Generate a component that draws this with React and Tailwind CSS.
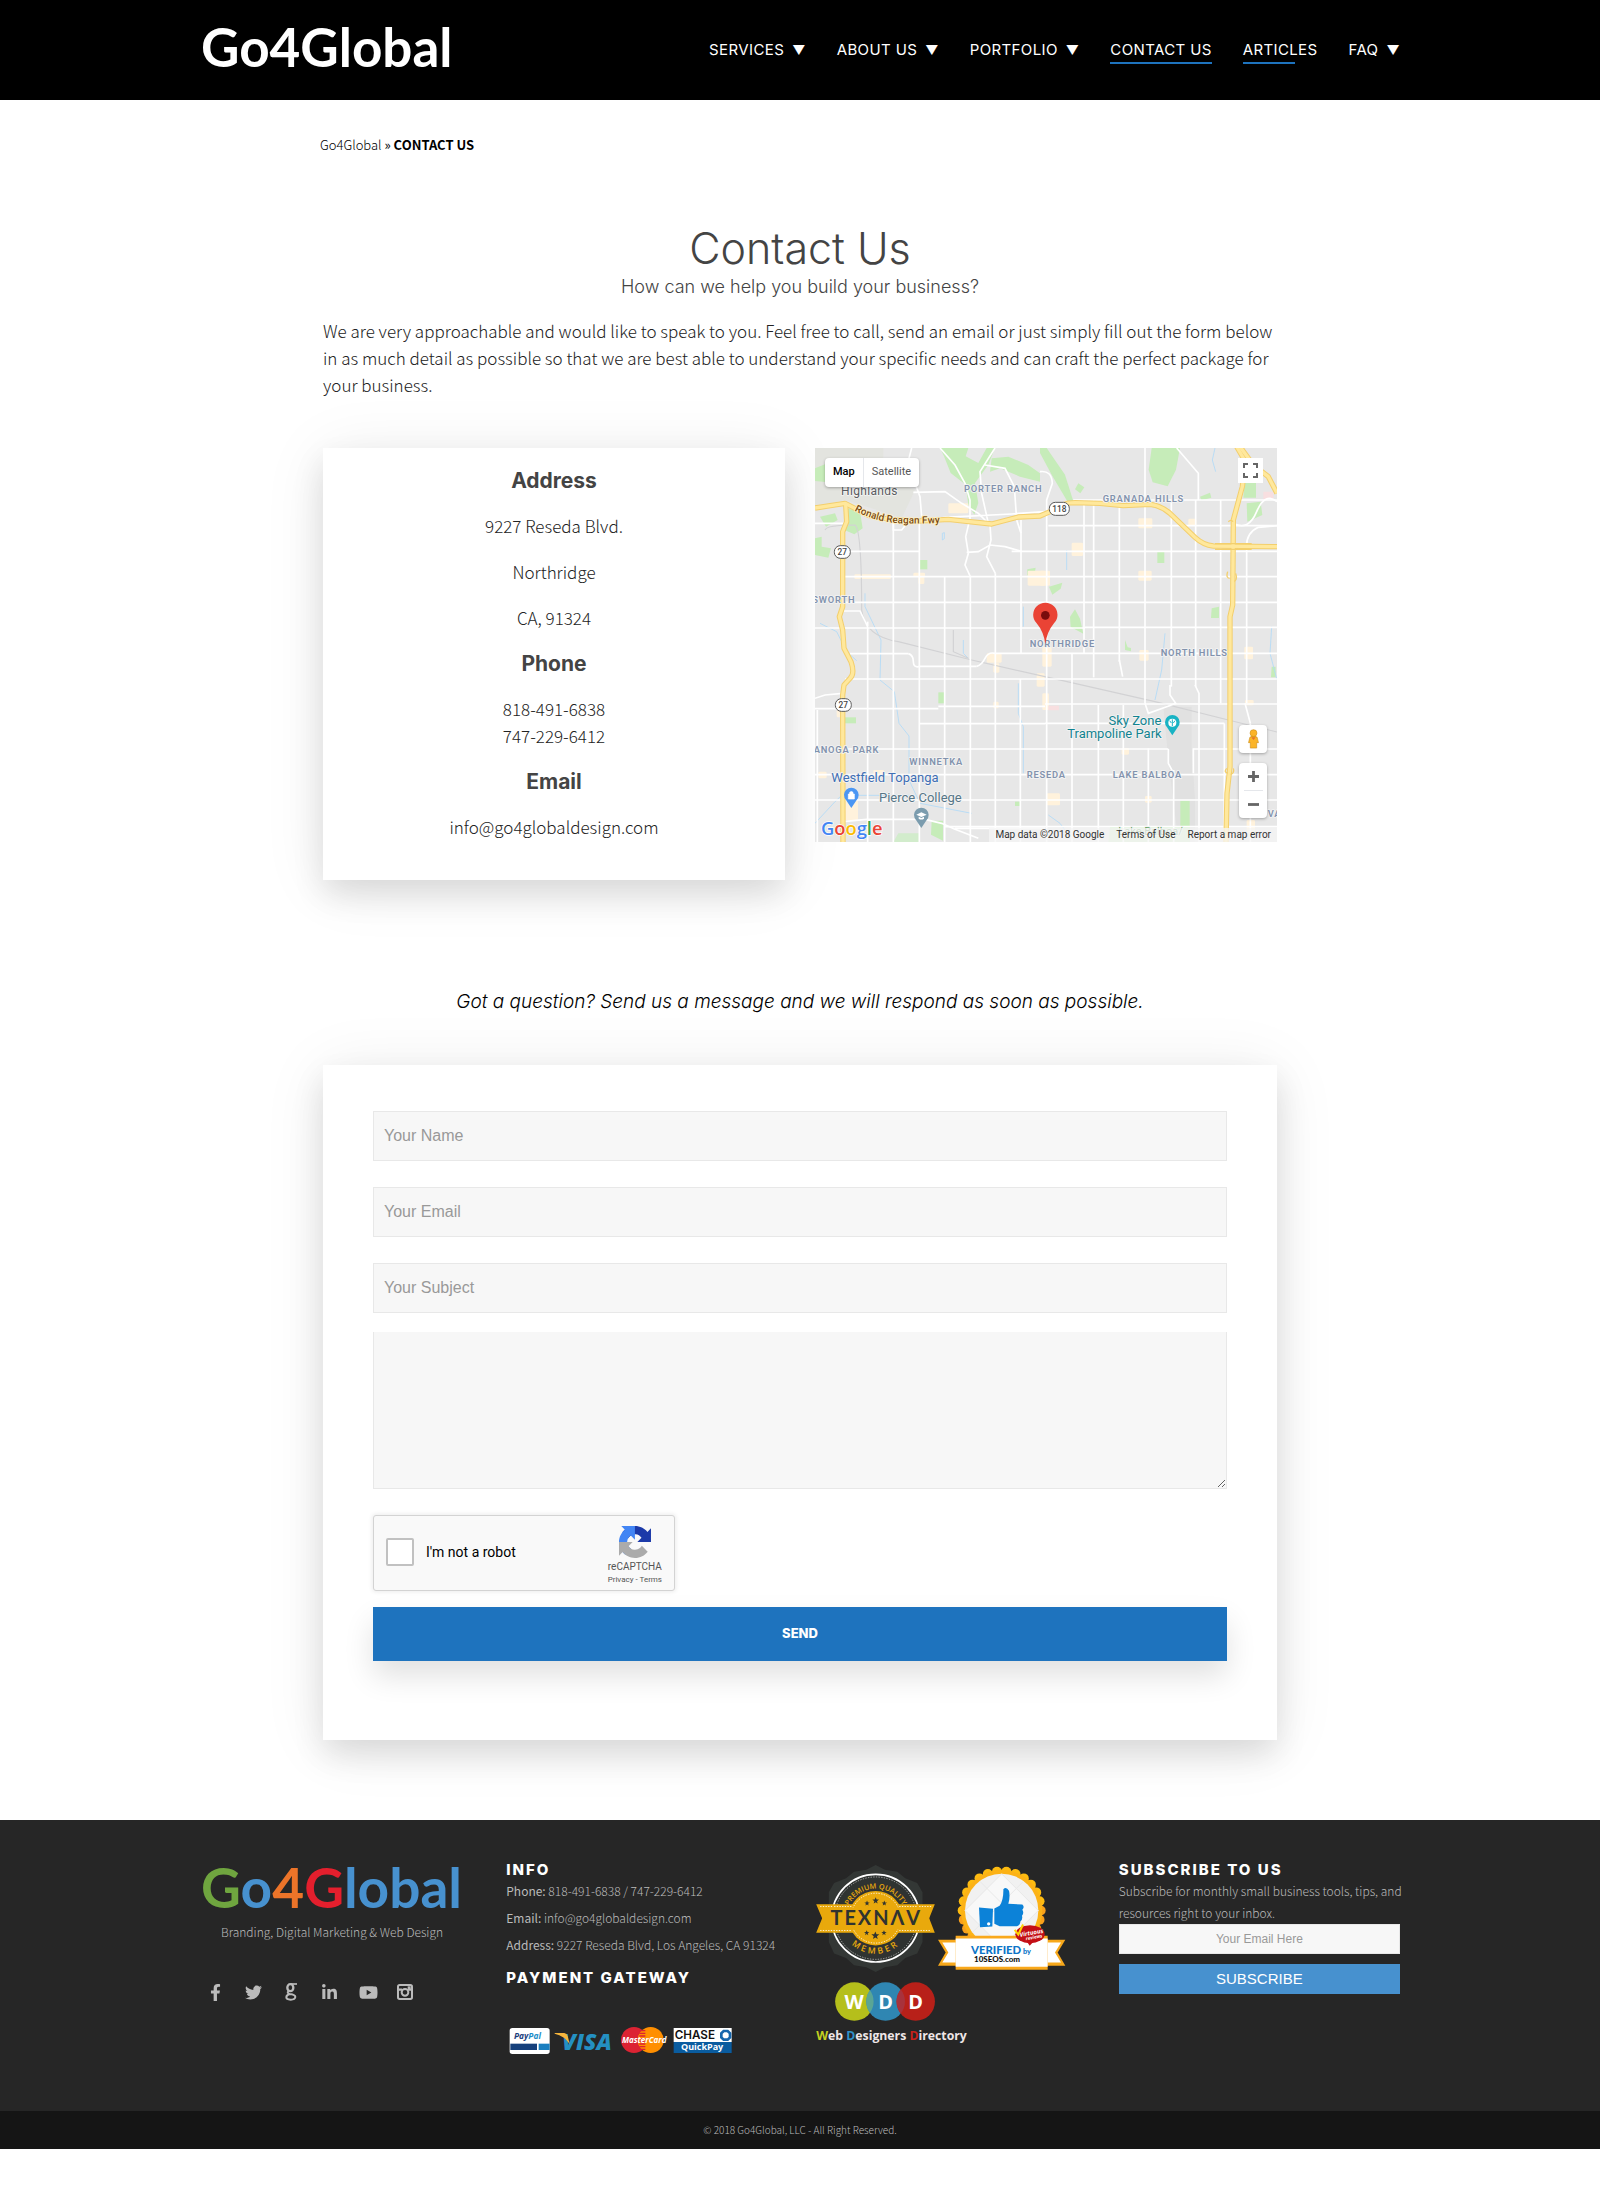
import React from "react";
import { FaFacebookF, FaTwitter, FaLinkedinIn, FaYoutube } from "react-icons/fa";

const sans = "font-['Noto_Sans_CJK_SC',sans-serif]";
const display = "font-['Inter',sans-serif]";
const cardShadow = "shadow-[0_15px_30px_rgba(0,0,0,0.11),0_5px_60px_rgba(0,0,0,0.08)]";

const navItems = [
  { label: "SERVICES", menu: true },
  { label: "ABOUT US", menu: true },
  { label: "PORTFOLIO", menu: true },
  { label: "CONTACT US", line: "w-full" },
  { label: "ARTICLES", line: "w-[70%]" },
  { label: "FAQ", menu: true },
];

function Header() {
  return (
    <header className="bg-black text-white">
      <div className="mx-auto flex h-[100px] max-w-[1200px] items-center justify-between">
        <a href="#home" className="pb-[6px] pl-px font-['Lato',sans-serif] text-[53px] leading-[60px] font-bold">
          Go4Global
        </a>
        <nav className={`${display} flex gap-[31px] text-[15px] leading-[20px]`}>
          {navItems.map((item) => (
            <a key={item.label} href="#nav" className="relative whitespace-nowrap tracking-wide">
              {item.label}
              {item.menu && <span className="ml-1 text-[13px]"> ▼</span>}
              {item.line && <span className={`absolute top-[22px] left-0 h-[2px] bg-[#1e73be] ${item.line}`} />}
            </a>
          ))}
        </nav>
      </div>
    </header>
  );
}

const verticals = [
  [37, 810, 1206], [188, 545, 1206], [265, 240, 1206], [343, 250, 1206], [419, 410, 1206], [496, 410, 1206],
  [571, 400, 1206], [648, 240, 640], [646, 717, 1206], [725, 300, 1206], [801, 640, 1206], [837, 180, 640],
  [866, 180, 712], [880, 795, 1206], [943, 180, 665], [1020, 24, 790], [955, 795, 1206], [1030, 925, 1206],
  [1099, 180, 740], [1106, 990, 1206], [1172, 180, 740], [1165, 925, 1000], [1182, 790, 1206], [1247, 180, 790],
  [1258, 850, 1206], [1325, 330, 790], [1336, 850, 1206],
];
const horizontals = [
  [334, 130, 343], [334, 620, 1416], [410, 115, 1416], [487, 120, 1416], [564, 30, 840], [562, 840, 1416], [641, 135, 310],
  [640, 570, 1416], [679, 345, 515], [717, 120, 1416], [806, 30, 400], [799, 400, 720], [792, 720, 1416],
  [851, 343, 720], [850, 720, 1258], [927, 40, 1090], [927, 1165, 1416], [1004, 30, 1416], [1080, 30, 1416],
  [1160, 420, 1416], [180, 805, 1416], [257, 730, 1416],
];
const freeways = [
  "M30 204L120 190L190 226L265 240L343 243L430 238L560 252L640 231L705 228L735 215Q770 188 810 188L885 190L955 197L1035 193Q1065 195 1095 220L1170 292Q1195 315 1225 318L1416 320",
  "M122 192L125 245L113 275L113 500L103 530L113 570L117 625L138 665Q150 700 136 714L117 735L113 765L114 1206",
  "M1295 20L1322 66L1312 140L1285 240L1283 495L1275 530L1275 980L1266 1060L1263 1206",
  "M1305 20L1345 75L1390 110L1416 160",
];
const parks = [
  "M405 24h85l-8 25l38 20l25-45h25l-20 50l-40 55l10 60l-12 35l-18-30l-8-60l-45-35l-20-50z",
  "M560 55l50-5l60 25l35 25v25l-60-15l-60-25l-30 10z",
  "M705 24h20l55 80l25 80l-15 5l-50-85l-35-65z",
  "M1040 24h85l-12 65l-25 50l-45-12l-12-38z",
  "M30 85l30-12l40 30l-15 25l-55-5z", "M125 205l40 10l8 50l-25 18l-28-12z",
  "M30 295l20-5v30l28 5l-8 28l-40-8z", "M45 230l45-10l8 20l-35 20z",
  "M345 360h22v28h-22z", "M400 757h17v33h-17z", "M118 832h35v18h-35z", "M667 388l25-5l-4 25l-22-2z",
  "M1057 334h21v35h-21z", "M1220 505l22-5v34h-24z", "M795 530l15-22l15 28l10 45l-38-20z",
  "M732 440l40-12l-5 18l-25 18z", "M960 600v30l18 4v-10l-10-2z", "M1126 1082h28v80h-28z",
  "M380 1142h34v60l-36-18z", "M630 1085h18v13h-18z", "M1318 130l35-5v48h-38z", "M1325 190l42-5l5 40l-45 20z",
  "M1400 680h12v32h-14z", "M820 130l18 12l-12 18l-16-12z", "M1185 170l30-12l4 15l-30 8z",
];
const shops = [
  [325, 398, 35, 12], [340, 408, 18, 24], [148, 403, 110, 14], [430, 190, 60, 30], [545, 640, 45, 28], [565, 670, 18, 28],
  [668, 392, 52, 45], [565, 785, 16, 20], [117, 1080, 42, 60], [95, 810, 20, 22], [800, 308, 34, 40], [1000, 235, 42, 30],
  [1000, 392, 40, 30], [1150, 236, 24, 22], [705, 392, 30, 45], [712, 620, 28, 60], [1003, 630, 28, 32], [1318, 620, 26, 38],
  [712, 760, 20, 50], [725, 1060, 40, 36], [1020, 1068, 20, 20], [950, 924, 22, 20], [40, 995, 25, 20], [205, 990, 32, 20],
  [695, 700, 24, 40], [1320, 780, 26, 16], [1325, 1140, 25, 40],
];
const streams = [
  "M180 460L180 500L228 600L225 720L268 755L282 850L312 888L312 1020L345 1090L500 1120",
  "M45 550L95 575L125 635L155 662", "M655 500V560", "M640 730L640 820L655 860V1000",
  "M475 600V640L490 655", "M1230 24L1222 60L1232 95", "M785 330V390", "M1080 580L1070 690L1050 780",
  "M30 1150L90 1085L110 1066H330", "M412 280v20l6-4v-18z", "M1400 560L1395 640L1416 720", "M730 1125l35 25l15 20",
];
const districts = [
  ["PORTER RANCH", 477, 156], ["GRANADA HILLS", 893, 187], ["SWORTH", 22, 489], ["NORTHRIDGE", 674, 621],
  ["NORTH HILLS", 1067, 649], ["ANOGA PARK", 26, 940], ["WINNETKA", 313, 976], ["RESEDA", 665, 1015],
  ["LAKE BALBOA", 923, 1015], ["VAN", 1388, 1132],
];

function MapDrawing() {
  return (
    <svg viewBox="30 24 1386 1182" preserveAspectRatio="xMidYMid slice" className="block h-full w-full font-['Roboto',sans-serif]" role="img" aria-label="Map of Northridge">
      <defs>
        <path id="fwyLabel" d="M148 212Q215 248 290 250T425 248" />
      </defs>
      <rect x="0" y="0" width="1440" height="1230" fill="#e7e7e7" />
      <path d="M30 24H235V110L330 150L290 235L200 205L120 180L30 200Z" fill="#e3e4df" />
      <path d="M1075 800H1160V925L1170 1080V1206H1120L1090 960Z" fill="#e1e1e1" />
      {parks.map((d) => <path key={d} d={d} fill="#c6ecb9" />)}
      <path d="M280 1180h65v26h-80z M915 1160h240v46h-245z" fill="#d2eccc" />
      {shops.map(([x, y, w, h]) => <rect key={`${x}-${y}`} x={x} y={y} width={w} height={h} rx="4" fill="#fff2dc" />)}
      <path d="M730 797h32v14h-32z M1375 155h30v22h-30z" fill="#f8dfe0" />
      <g fill="none" stroke="#b0daf8" strokeWidth="2.5">{streams.map((d) => <path key={d} d={d} />)}</g>
      <g fill="none" stroke="#d2d2d4" strokeWidth="3.5">
        <path d="M60 270Q65 255 150 255Q170 270 170 510Q180 590 280 605L500 660L720 710L1050 785L1270 840L1416 876" />
        <path d="M445 570V635L490 655" />
      </g>
      <g fill="none" stroke="#fff" strokeWidth="5">
        {verticals.map(([x, a, b]) => <path key={`v${x}-${a}`} d={`M${x} ${a}V${b}`} />)}
        {horizontals.map(([y, a, b]) => <path key={`h${y}-${a}`} d={`M${a} ${y}H${b}`} />)}
        <path d="M265 240V270H290L310 245M320 24L308 70L345 170L350 230M325 157L420 155L470 190L520 220L555 255L558 300L545 350L571 400M405 24L450 75L480 130L495 180V235L482 290L490 340L480 375L496 410" />
        <path d="M570 24L525 95L530 160L550 250M540 75L600 85L628 140L635 240L648 280M30 250H120M310 250L420 232L620 222L720 215M485 337L520 335L555 315L600 320L650 334" />
        <path d="M705 95Q740 90 742 130L725 180V300M1115 24L1180 100V180M1020 790L1030 820L1085 800L1112 790L1095 765V735M943 660L953 710M1170 735L1182 760V790" />
        <path d="M115 513H165L188 560M310 641Q325 645 325 665T345 679M515 679Q530 675 540 655T570 640M30 775L60 765L113 760M114 1145L185 1138H360L410 1150L450 1168L520 1195" />
        <path d="M1090 927V970L1106 1000M1325 330Q1320 280 1360 262L1416 257M1285 250Q1330 275 1355 215T1416 185M1320 790L1336 850M450 1165H720" />
      </g>
      <g fill="none" stroke="#f3cf6d" strokeWidth="16" strokeLinejoin="round">{freeways.map((d) => <path key={d} d={d} />)}</g>
      <g fill="none" stroke="#ffe89c" strokeWidth="10" strokeLinejoin="round">{freeways.map((d) => <path key={d} d={d} />)}</g>
      <g fill="none" stroke="#f3cf6d" strokeWidth="4">
        <path d="M1270 245q8-8 14 0M1268 395q-6 20 6 20M1292 400q6 20-4 24M1265 985q-10 12 4 14M1285 985q4 14-8 18M1230 311h110M1230 328h110" />
      </g>
      <g fill="#fff" stroke="#5a5a5a" strokeWidth="3">
        <rect x="88" y="317" width="48" height="38" rx="18" />
        <rect x="91" y="776" width="48" height="38" rx="18" />
        <rect x="733" y="187" width="60" height="39" rx="18" />
      </g>
      <g fill="#444" fontSize="25" fontWeight="500" textAnchor="middle">
        <text x="112" y="345">27</text>
        <text x="115" y="804">27</text>
        <text x="763" y="216">118</text>
      </g>
      <g stroke="#f4f4f4" strokeWidth="5" strokeLinejoin="round" paintOrder="stroke">
        <g fill="#8292ad" fontSize="28" fontWeight="600" letterSpacing="2.4">
          {districts.map(([t, x, y]) => <text key={t} x={x} y={y}>{t}</text>)}
        </g>
        <text x="108" y="165" fill="#5a5d61" fontSize="36" letterSpacing="1">Highlands</text>
        <text fill="#7a4a12" fontSize="30" fontWeight="500" stroke="#fff1c4"><textPath href="#fwyLabel">Ronald Reagan Fwy</textPath></text>
        <text x="79" y="1027" fill="#3f6fb5" fontSize="39">Westfield Topanga</text>
        <text x="222" y="1087" fill="#567687" fontSize="39">Pierce College</text>
        <g fill="#128390" fontSize="39" textAnchor="end">
          <text x="1069" y="854">Sky Zone</text>
          <text x="1070" y="893">Trampoline Park</text>
        </g>
        <text x="940" y="1186" fill="#5f9e5f" fontSize="33">Lake Balboa/</text>
      </g>
      <g>
        <path d="M139 1104L123 1080A22 22 0 1 1 155 1080Z" fill="#4b96f3" />
        <path d="M130 1062h18v15h-18zM134 1062v-5q5-5 10 0v5" fill="#fff" stroke="#fff" strokeWidth="2" />
        <path d="M349 1164L333 1140A22 22 0 1 1 365 1140Z" fill="#7b9cae" />
        <path d="M334 1124l15-7l16 7l-16 7zM341 1130v6q8 5 16 0v-6l-8 4z" fill="#fff" />
        <path d="M1102 886L1086 862A22 22 0 1 1 1118 862Z" fill="#18b3c4" />
        <circle cx="1102" cy="848" r="12" fill="#fff" /><path d="M1102 838v20M1094 842l5 7M1110 842l-5 7" stroke="#18b3c4" strokeWidth="3" />
        <path d="M721 612Q716 575 695 550A36.500 36.500 0 1 1 747 550Q726 575 721 612Z" fill="#ea4335" />
        <circle cx="721" cy="526" r="13" fill="#7a0c0c" />
      </g>
      <text x="48" y="1184" fontSize="55" fontWeight="600" stroke="#fff" strokeWidth="4" paintOrder="stroke" className="font-['Open_Sans',sans-serif]">
        <tspan fill="#4285f4">G</tspan><tspan fill="#ea4335">o</tspan><tspan fill="#fbbc05">o</tspan>
        <tspan fill="#4285f4">g</tspan><tspan fill="#34a853">l</tspan><tspan fill="#ea4335">e</tspan>
      </text>
    </svg>
  );
}

function MapPanel() {
  return (
    <div className="relative h-[394px] overflow-hidden font-['Roboto',sans-serif]">
      <MapDrawing />
      <div className="absolute top-[10px] left-[10px] flex h-[29px] rounded-sm bg-white text-[11px] shadow-[0_1px_3px_rgba(0,0,0,0.3)]">
        <button className="border-r border-gray-200 px-2 font-medium text-black">Map</button>
        <button className="px-2 text-[#565656]">Satellite</button>
      </div>
      <button aria-label="Toggle fullscreen" className="absolute top-[10px] right-[14px] flex size-[25px] items-center justify-center bg-white">
        <svg viewBox="0 0 15 15" className="size-[15px]" fill="none" stroke="#666" strokeWidth="2">
          <path d="M1 5V1H5M10 1H14V5M14 10V14H10M5 14H1V10" />
        </svg>
      </button>
      <button aria-label="Street view" className="absolute right-[10px] bottom-[89px] flex size-[28px] items-center justify-center rounded-sm bg-white shadow-[0_1px_3px_rgba(0,0,0,0.3)]">
        <svg viewBox="0 0 14 22" className="h-[20px] w-[13px]">
          <path d="M3 9Q7 6 11 9L12.500 15H10.500V21H3.500V15H1.500Z" fill="#fbb428" stroke="#c8860e" strokeWidth=".6" />
          <circle cx="7" cy="4.500" r="3.800" fill="#fbb428" stroke="#c8860e" strokeWidth=".6" />
          <path d="M4.500 9h5L7 12Z" fill="#e5752b" />
        </svg>
      </button>
      <div className="absolute right-[10px] bottom-[24px] flex w-[28px] flex-col items-center rounded-sm bg-white shadow-[0_1px_3px_rgba(0,0,0,0.3)]">
        <button aria-label="Zoom in" className="flex h-[27px] w-full items-center justify-center">
          <svg viewBox="0 0 11 11" className="size-[11px]" stroke="#666" strokeWidth="2.800"><path d="M0 5.500H11M5.500 0V11" /></svg>
        </button>
        <span className="h-px w-[19px] bg-gray-200" />
        <button aria-label="Zoom out" className="flex h-[27px] w-full items-center justify-center">
          <svg viewBox="0 0 11 11" className="size-[11px]" stroke="#666" strokeWidth="2.800"><path d="M0 5.500H11" /></svg>
        </button>
      </div>
      <div className="absolute right-0 bottom-0 flex h-[14px] items-center gap-3 bg-[#f5f5f5]/75 px-[6px] text-[10px] leading-[14px] text-[#333]">
        <span>Map data ©2018 Google</span>
        <a href="#terms">Terms of Use</a>
        <a href="#report">Report a map error</a>
      </div>
    </div>
  );
}

const h3 = `${display} pt-[2px] text-[21px] leading-[24px] font-bold text-[#444]`;

function AddressCard() {
  return (
    <div className={`flex flex-col gap-[19px] bg-white pt-[19px] pb-[40px] text-center text-[17px] leading-[27px] font-light text-[#222] ${cardShadow}`}>
      <h3 className={h3}>Address</h3>
      <p>9227 Reseda Blvd.</p>
      <p>Northridge</p>
      <p>CA, 91324</p>
      <h3 className={h3}>Phone</h3>
      <p>818-491-6838<br />747-229-6412</p>
      <h3 className={h3}>Email</h3>
      <p>info@go4globaldesign.com</p>
    </div>
  );
}

const field = "block w-full border border-[#e8e8e8] bg-[#f7f7f7] px-[10px] text-[16px] placeholder:text-[#999] font-['Liberation_Sans',sans-serif]";

function Captcha() {
  return (
    <div className="mt-[26px] flex h-[76px] w-[302px] items-center justify-between rounded-[3px] border border-[#d3d3d3] bg-[#f9f9f9] px-[12px] font-['Roboto',sans-serif] shadow-[0_0_4px_1px_rgba(0,0,0,0.08)]">
      <label className="flex items-center gap-3 pb-[2px] text-[14px] text-black">
        <input type="checkbox" className="size-[28px] appearance-none rounded-[2px] border-2 border-[#c1c1c1] bg-white" />
        I'm not a robot
      </label>
      <div className="flex flex-col items-center pt-[6px] text-[#555]">
        <svg viewBox="0 0 64 64" className="mb-[2px] size-[32px]">
          <path fill="#1c3aa9" d="M64 31.955l-.033-1.37V4.687l-7.16 7.16C50.948 4.674 42.033.093 32.05.093c-10.4 0-19.622 4.96-25.458 12.64l11.736 11.86a15.55 15.55 0 0 1 4.754-5.334c2.050-1.600 4.952-2.906 8.968-2.906.485 0 .86.057 1.135.163 4.976.393 9.288 3.140 11.828 7.124l-8.307 8.307L64 31.953" />
          <path fill="#4285f4" d="M31.862.094l-1.370.033H4.594l7.160 7.160C4.580 13.147 0 22.060 0 32.046c0 10.400 4.960 19.622 12.640 25.458L24.500 45.768a15.550 15.550 0 0 1-5.334-4.754c-1.600-2.050-2.906-4.952-2.906-8.968 0-.485.057-.86.163-1.135.393-4.976 3.140-9.288 7.124-11.828l8.307 8.307L31.860.095" />
          <path fill="#ababab" d="M.001 32.045l.033 1.370v25.898l7.160-7.160c5.860 7.173 14.774 11.754 24.760 11.754 10.400 0 19.622-4.960 25.458-12.640l-11.736-11.860a15.550 15.550 0 0 1-4.754 5.334c-2.050 1.600-4.952 2.906-8.968 2.906-.485 0-.86-.057-1.135-.163-4.976-.393-9.288-3.140-11.828-7.124l8.307-8.307c-10.522.040-22.400.066-27.295-.005" />
        </svg>
        <span className="text-[10px] leading-[14px]">reCAPTCHA</span>
        <span className="text-[8px] leading-[12px]"><a href="#privacy">Privacy</a> - <a href="#captcha-terms">Terms</a></span>
      </div>
    </div>
  );
}

function ContactForm() {
  return (
    <form className={`bg-white px-[50px] pt-[46px] pb-[79px] ${cardShadow}`} onSubmit={(e) => e.preventDefault()}>
      <div className="flex flex-col gap-[26px]">
        <input type="text" aria-label="Your Name" placeholder="Your Name" className={`${field} h-[50px]`} />
        <input type="email" aria-label="Your Email" placeholder="Your Email" className={`${field} h-[50px]`} />
        <input type="text" aria-label="Your Subject" placeholder="Your Subject" className={`${field} h-[50px]`} />
      </div>
      <textarea aria-label="Message" className={`${field} mt-[19px] h-[157px] border-t-0`} />
      <Captcha />
      <button type="submit" className={`${display} mt-4 h-[54px] w-full bg-[#1e73be] text-[13px] font-extrabold text-white shadow-[0_15px_30px_rgba(0,0,0,0.12)]`}>
        SEND
      </button>
    </form>
  );
}

function GoogleIcon() {
  return (
    <svg viewBox="0 0 36 54" className="ml-[2px] h-[18px] w-[12px]" fill="none" stroke="currentColor">
      <ellipse cx="16" cy="14" rx="9" ry="10.500" strokeWidth="7" />
      <path d="M17 3H36" strokeWidth="5" />
      <path d="M11 24Q4 30 14 33Q31 35 31 42Q30 50 17 50Q4 50 4 43Q4 36 14 33" strokeWidth="6" />
    </svg>
  );
}

function CameraIcon() {
  return (
    <svg viewBox="0 0 48 48" className="size-[16px]" fill="none" stroke="currentColor">
      <rect x="3" y="3" width="42" height="42" rx="5" strokeWidth="6" />
      <circle cx="24" cy="25" r="10" strokeWidth="6" />
      <path d="M3 17H15M33 17H45" strokeWidth="7" />
      <rect x="32" y="7" width="9" height="9" fill="currentColor" stroke="none" />
    </svg>
  );
}

const socials = [
  ["Facebook", <FaFacebookF size={17} />],
  ["Twitter", <FaTwitter size={17} />],
  ["Google", <GoogleIcon />],
  ["LinkedIn", <FaLinkedinIn size={17} />],
  ["YouTube", <FaYoutube size={19} />],
  ["Instagram", <CameraIcon />],
];

function PaymentCards() {
  return (
    <svg viewBox="55 555 675 90" className="mt-[37px] ml-[2px] h-[30px] w-[225px]" role="img" aria-label="Accepted payment methods">
      <rect x="60" y="564" width="120" height="78" rx="8" fill="#fff" />
      <path d="M62 611H142V630H62Z" fill="#15407c" /><path d="M147 611H180V630H147Z" fill="#1a7fc0" />
      <g className="font-['Open_Sans',sans-serif]" fontWeight="800" fontStyle="italic">
        <text x="73" y="596" fontSize="25" fontWeight="700" fill="#1b3d7c">Pay<tspan fill="#1a8cc8">Pal</tspan></text>
        <text x="217" y="630" fontSize="68" fill="#2490c2">VISA</text>
        <path d="M195 579H224Q232 580 234 588L240 612Q225 588 195 581Z" fill="#f5b43c" />
        <circle cx="433" cy="600" r="39" fill="#dc2333" /><circle cx="483" cy="600" r="39" fill="#ff8f00" />
        <path d="M458 570V630" stroke="#dc2333" strokeWidth="18" strokeDasharray="4 4" />
        <text x="397" y="609" fontSize="24" fontWeight="700" fill="#fff">MasterCard</text>
      </g>
      <rect x="552" y="564" width="174" height="42" fill="#fff" /><rect x="552" y="606" width="174" height="33" fill="#0a5c9f" />
      <text x="555" y="598" fontSize="35" fontWeight="600" fill="#111" className="font-['Inter',sans-serif]">CHASE</text>
      <path d="M702 573H714L721 580V592L714 599H702L695 592V580Z" fill="none" stroke="#1767ad" strokeWidth="8" />
      <text x="574" y="630" fontSize="27" fontWeight="700" fill="#fff" className="font-['Open_Sans',sans-serif]">QuickPay</text>
    </svg>
  );
}

const star = "M0 -10L3 -3L10 -3L4 2L6 9L0 5L-6 9L-4 2L-10 -3L-3 -3Z";

function TexnavBadge() {
  return (
    <svg viewBox="45 65 360 325" className="h-[108px] w-[120px]" role="img" aria-label="Texnav premium quality member">
      <defs>
        <path id="texTop" d="M142 259A90 90 0 1 1 312 259" />
        <path id="texBottom" d="M120 228A107 107 0 0 0 334 228" />
      </defs>
      <path d="M227 68L255 82L292 88L316 108L352 122L368 150V300L352 334L316 348L292 370L255 376L227 390L199 376L162 370L138 348L102 334L86 300V150L102 122L138 108L162 88L199 82Z" fill="#333735" />
      <circle cx="227" cy="228" r="132" fill="#2f3331" stroke="#fff" strokeWidth="5" />
      <circle cx="227" cy="228" r="124" fill="none" stroke="#ddd" strokeWidth="2" strokeDasharray="4 4" />
      <circle cx="227" cy="228" r="82" fill="#e9a90c" />
      <path d="M48 186H405L388 228L405 272H48L66 228Z" fill="#e9a90c" />
      <circle cx="227" cy="228" r="75" fill="none" stroke="#fff" strokeWidth="2.500" strokeDasharray="4 4" />
      <path d="M102 193H156M298 193H352M60 193H96M358 193H394M60 265H156M298 265H394" stroke="#fff" strokeWidth="2.500" strokeDasharray="4 4" />
      <path d="M66 196H388V262H66Z" fill="#e9a90c" />
      <g fill="#2f3331">
        <path d={star} transform="translate(227 175)" /><path d={star} transform="translate(201 183) scale(.8)" /><path d={star} transform="translate(253 183) scale(.8)" />
        <path d={star} transform="translate(226 280) scale(1.200)" /><path d={star} transform="translate(200 272) scale(.8)" /><path d={star} transform="translate(252 272) scale(.8)" />
      </g>
      <text x="229" y="249" fontSize="60" fontWeight="700" letterSpacing="6" fill="#2f3331" textAnchor="middle" className="font-['Lato',sans-serif]">TEXNΛV</text>
      <g fill="#e9a90c" textAnchor="middle" className="font-['Open_Sans',sans-serif]" fontWeight="600">
        <text fontSize="22"><textPath href="#texTop" startOffset="50%">PREMIUM QUALITY</textPath></text>
        <text fontSize="26" letterSpacing="8"><textPath href="#texBottom" startOffset="50%">MEMBER</textPath></text>
      </g>
    </svg>
  );
}

const scallops = Array.from({ length: 26 }, (_, i) => (i * 2 * Math.PI) / 26);

function VerifiedBadge() {
  return (
    <svg viewBox="412 75 390 320" className="h-[107px] w-[130px]" role="img" aria-label="Verified by 10seos.com">
      <path d="M415 302H500V380H415L438 340ZM797 302H712V380H797L774 340Z" fill="#f7a81b" />
      <path d="M428 310H500V370H428L446 340ZM784 310H712V370H784L766 340Z" fill="#fff" />
      {scallops.map((a) => <circle key={a} cx={606 + 117 * Math.cos(a)} cy={214 + 117 * Math.sin(a)} r="15" fill={Math.sin(a) < 0 ? "#fdbb10" : "#f9a01b"} />)}
      <circle cx="606" cy="214" r="122" fill="#fcb216" />
      <circle cx="606" cy="214" r="110" fill="#f1f1f1" />
      <path d="M606 104L716 214L606 324L496 214ZM540 126L694 280M672 126L518 280" fill="#f8f8f8" stroke="#e8e8e8" strokeWidth="3" />
      <path d="M538 205L580 209L578 262L541 264Z" fill="#0c82d8" /><circle cx="567" cy="254" r="5" fill="#fff" />
      <path d="M584 208L600 200Q612 182 611 150Q620 141 628 155Q632 172 626 194L668 196Q676 203 668 212Q674 222 667 230Q670 242 662 247Q662 258 652 261H600L584 254Z" fill="#0c82d8" />
      <path d="M468 290H744V392H468Z" fill="#f9a81b" /><path d="M468 298H744V383H468Z" fill="#fff" />
      <text x="514" y="344" fontSize="34" fontWeight="900" fill="#0c75c8" className="font-['Lato',sans-serif]">VERIFIED<tspan dx="5" fontSize="22">by</tspan></text>
      <text x="523" y="370" fontSize="24" fontWeight="900" fill="#111" className="font-['Lato',sans-serif]">10SEOS.com</text>
      <ellipse cx="691" cy="285" rx="44" ry="27" fill="#c40f16" /><path d="M680 305L690 320L704 305Z" fill="#c40f16" />
      <g fill="#fff" fontWeight="700" fontStyle="italic" transform="rotate(-10 690 285)" className="font-['Open_Sans',sans-serif]">
        <text x="660" y="288" fontSize="18">Virtuous</text><text x="676" y="301" fontSize="14">reviews</text>
      </g>
      <path d="M645 272L656 286L670 256" fill="none" stroke="#ffd400" strokeWidth="6" />
    </svg>
  );
}

function DirectoryBadge() {
  return (
    <svg viewBox="40 420 475 190" className="h-[63px] w-[158px]" role="img" aria-label="Web Designers Directory">
      <circle cx="158" cy="482" r="58" fill="#b5bf1b" />
      <circle cx="252" cy="482" r="58" fill="#2f86b2" /><circle cx="343" cy="482" r="58" fill="#b82019" />
      <path d="M205 448A58 58 0 0 1 205 516A58 58 0 0 1 205 448Z" fill="#5aa595" /><path d="M298 446A58 58 0 0 1 298 518A58 58 0 0 1 298 446Z" fill="#a8323c" />
      <g className="font-['Open_Sans',sans-serif]" fontWeight="700" fill="#fff">
        <g fontSize="60" textAnchor="middle"><text x="157" y="503">W</text><text x="252" y="503">D</text><text x="343" y="503">D</text></g>
        <text x="43" y="597" fontSize="37" fill="#efe6e6"><tspan fill="#c3d021">W</tspan>eb <tspan fill="#2f90c8">D</tspan>esigners <tspan fill="#c8201a">D</tspan>irectory</text>
      </g>
    </svg>
  );
}

const footHead = `${display} text-[15px] leading-[20px] font-extrabold tracking-[2px] text-white`;

function Footer() {
  return (
    <footer className="mt-[80px] bg-[#262626] text-[#bbb]">
      <div className="mx-auto grid min-h-[291px] max-w-[1200px] grid-cols-4 gap-[25px] pt-10 text-[12px] leading-[22px] font-light">
        <div>
          <div className="w-[264px]">
            <p className="pl-px font-['Lato',sans-serif] text-[55px] leading-[54px] font-bold text-[#4791cf]">
              <span className="text-[#6fa53f]">G</span>o<span className="text-[#ec7429]">4</span><span className="text-[#e41f2d]">G</span>lobal
            </p>
            <p className="mt-[7px] text-center">Branding, Digital Marketing &amp; Web Design</p>
          </div>
          <div className="mt-[38px] flex pl-px">
            {socials.map(([name, icon]) => (
              <a key={name} href="#social" aria-label={name} className="flex h-[22px] w-[38px] items-center justify-start pl-[6px]">{icon}</a>
            ))}
          </div>
        </div>
        <div>
          <h4 className={footHead}>INFO</h4>
          <div className="flex flex-col gap-[5px] whitespace-nowrap">
            <p><b>Phone:</b> 818-491-6838 / 747-229-6412</p>
            <p><b>Email:</b> info@go4globaldesign.com</p>
            <p><b>Address:</b> 9227 Reseda Blvd, Los Angeles, CA 91324</p>
          </div>
          <h4 className={`${footHead} mt-3`}>PAYMENT GATEWAY</h4>
          <PaymentCards />
        </div>
        <div className="flex flex-wrap content-start gap-x-[2px] gap-y-[9px] pt-1 pl-[2px]">
          <TexnavBadge />
          <VerifiedBadge />
          <DirectoryBadge />
        </div>
        <form onSubmit={(e) => e.preventDefault()}>
          <h4 className={footHead}>SUBSCRIBE TO US</h4>
          <p className="-mr-3">Subscribe for monthly small business tools, tips, and resources right to your inbox.</p>
          <input type="email" aria-label="Your Email Here" placeholder="Your Email Here" className="block h-[30px] w-full border border-[#e8e8e8] bg-[#f7f7f7] text-center font-['Liberation_Sans',sans-serif] text-[12px] placeholder:text-[#999]" />
          <button type="submit" className="mt-[10px] block h-[30px] w-full bg-[#4791cf] font-['Liberation_Sans',sans-serif] text-[15px] font-normal text-white">SUBSCRIBE</button>
        </form>
      </div>
      <p className="bg-[#151515] text-center text-[10px] leading-[38px] font-light">© 2018 Go4Global, LLC - All Right Reserved.</p>
    </footer>
  );
}

export default function App() {
  return (
    <div className={`${sans} min-h-screen bg-white text-black`}>
      <Header />
      <main className="mx-auto max-w-[960px]">
        <p className="pt-[35px] text-[13px] leading-[20px]">
          <a href="#home" className="font-light">Go4Global</a> » <b>CONTACT US</b>
        </p>
        <div className="px-[3px]">
          <div className={`${display} pt-[65px] text-center text-[#444]`}>
            <h1 className="text-[43px] leading-[56px] font-light">Contact Us</h1>
            <p className="text-[18px] leading-[22px] font-light">How can we help you build your business?</p>
          </div>
          <p className="mt-[19px] text-[17px] leading-[27px] font-light text-[#222]">
            We are very approachable and would like to speak to you. Feel free to call, send an email or just simply fill out the form below in as much detail as possible so that we are best able to understand your specific needs and can craft the perfect package for your business.
          </p>
          <div className="mt-[50px] grid grid-cols-2 items-start gap-[30px]">
            <AddressCard />
            <MapPanel />
          </div>
          <p className={`${display} mt-[108px] mb-[50px] text-center text-[19px] leading-[27px] font-light italic`}>
            Got a question? Send us a message and we will respond as soon as possible.
          </p>
          <ContactForm />
        </div>
      </main>
      <Footer />
    </div>
  );
}
